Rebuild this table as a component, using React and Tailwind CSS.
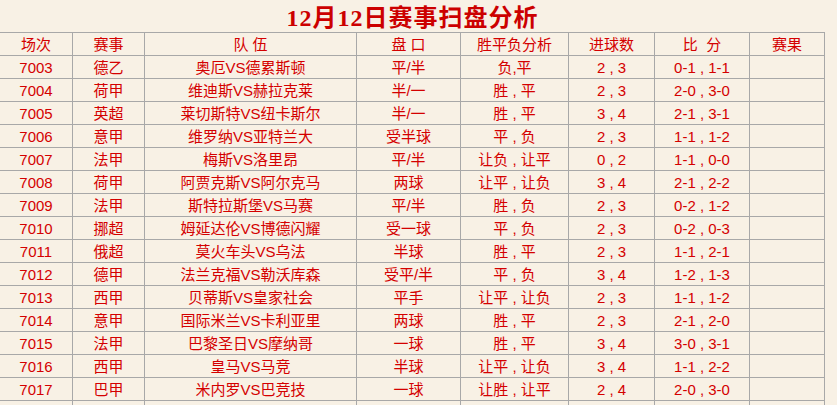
import React from 'react';

const rows = [
    ['7003', '德乙', '奥厄VS德累斯顿', '平/半', '负,平', '2 , 3', '0-1 , 1-1'],
    ['7004', '荷甲', '维迪斯VS赫拉克莱', '半/一', '胜 , 平', '2 , 3', '2-0 , 3-0'],
    ['7005', '英超', '莱切斯特VS纽卡斯尔', '半/一', '胜 , 平', '3 , 4', '2-1 , 3-1'],
    ['7006', '意甲', '维罗纳VS亚特兰大', '受半球', '平 , 负', '2 , 3', '1-1 , 1-2'],
    ['7007', '法甲', '梅斯VS洛里昂', '平/半', '让负 , 让平', '0 , 2', '1-1 , 0-0'],
    ['7008', '荷甲', '阿贾克斯VS阿尔克马', '两球', '让平 , 让负', '3 , 4', '2-1 , 2-2'],
    ['7009', '法甲', '斯特拉斯堡VS马赛', '平/半', '胜 , 负', '2 , 3', '0-2 , 1-2'],
    ['7010', '挪超', '姆延达伦VS博德闪耀', '受一球', '平 , 负', '2 , 3', '0-2 , 0-3'],
    ['7011', '俄超', '莫火车头VS乌法', '半球', '胜 , 平', '2 , 3', '1-1 , 2-1'],
    ['7012', '德甲', '法兰克福VS勒沃库森', '受平/半', '平 , 负', '3 , 4', '1-2 , 1-3'],
    ['7013', '西甲', '贝蒂斯VS皇家社会', '平手', '让平 , 让负', '2 , 3', '1-1 , 1-2'],
    ['7014', '意甲', '国际米兰VS卡利亚里', '两球', '胜 , 平', '2 , 3', '2-1 , 2-0'],
    ['7015', '法甲', '巴黎圣日VS摩纳哥', '一球', '胜 , 平', '3 , 4', '3-0 , 3-1'],
    ['7016', '西甲', '皇马VS马竞', '半球', '让平 , 让负', '3 , 4', '1-1 , 2-2'],
    ['7017', '巴甲', '米内罗VS巴竞技', '一球', '让胜 , 让平', '2 , 4', '2-0 , 3-0'],
    ['', '', '', '', '', '', ''],
];

const head = ['场次', '赛事', '队 伍', '盘 口', '胜平负分析', '进球数', '比  分', '赛果'];

const Row = ({ cells }) => (
    <div className="grid grid-cols-[73px_72px_212px_104px_108px_86px_95px_75px] h-[23px]">
        {cells.map((c, i) => (
            <div key={i} className="border-r border-b border-[#a8a8a8] flex items-center justify-center whitespace-pre">
                {c}
            </div>
        ))}
    </div>
);

const App = () => {
    return (
        <div className="w-[837px] h-[405px] overflow-hidden bg-[#f8f1e5] text-[#d40000] text-[15px] leading-none" style={{ fontFamily: '"Liberation Sans", "Noto Sans CJK SC", sans-serif' }}>
            <div className="w-[825px] h-8 flex items-center justify-center pt-[3px]">
                <h1 className="text-[24px] font-bold text-[#cc0000] tracking-[1px]" style={{ fontFamily: '"Liberation Serif", "Noto Sans CJK SC", serif' }}>12月12日赛事扫盘分析</h1>
            </div>
            <div className="w-[825px] border-t border-[#a8a8a8]">
                <Row cells={head} />
                {rows.map((r, i) => (
                    <Row key={i} cells={[...r, '']} />
                ))}
            </div>
        </div>
    );
};

export default App;
